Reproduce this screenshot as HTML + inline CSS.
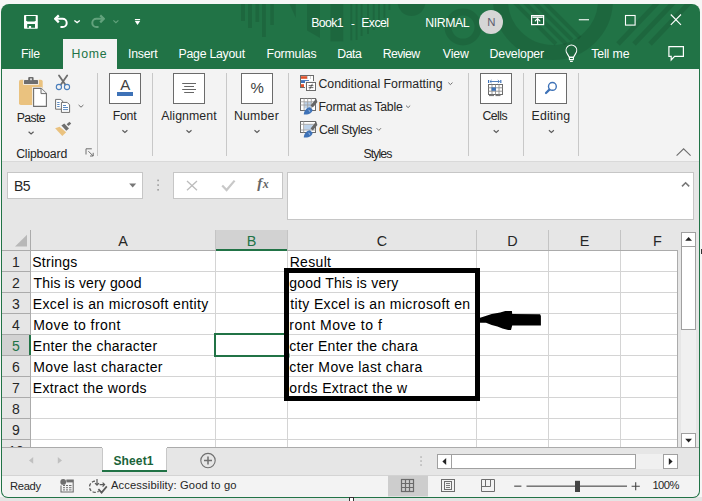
<!DOCTYPE html>
<html><head><meta charset="utf-8">
<style>
*{box-sizing:border-box}
html,body{margin:0;padding:0}
body{width:702px;height:501px;position:relative;overflow:hidden;background:#f6f6f6;font-family:"Liberation Sans",sans-serif;color:#262626}
.a{position:absolute}
.t{position:absolute;white-space:pre;line-height:1}
.w{color:#fff}
.sep{position:absolute;width:1px;background:#c8c8c8}
.hl{position:absolute;height:1px;background:#d4d4d4}
.vl{position:absolute;width:1px;background:#d4d4d4}
.cell{position:absolute;white-space:pre;font-size:14px;line-height:20px;color:#000}
.rn{position:absolute;left:2px;width:28px;text-align:center;font-size:14px;line-height:22px;color:#262626}
.ch{position:absolute;top:231px;height:20px;text-align:center;font-size:14.4px;line-height:20px;color:#262626}
</style></head>
<body>
<div class="a" style="left:0;top:497px;width:702px;height:4px;background:#e4e4e4"></div>
<!-- window green -->
<div class="a" style="left:1px;top:4px;width:699px;height:494px;border-radius:8px 8px 7px 7px;background:#217346"></div>

<svg class="a" style="left:0;top:0" width="702" height="501" viewBox="0 0 702 501">
<defs><clipPath id="tb"><path d="M1,12 A8,8 0 0 1 9,4 H692 A8,8 0 0 1 700,12 V69 H1 Z"/></clipPath></defs>
<g clip-path="url(#tb)" fill="#000" fill-opacity="0.1">
<rect x="241" y="0" width="4" height="21"/>
<rect x="248" y="0" width="4" height="28"/>
<rect x="255.4" y="0" width="3.8" height="22"/>
<rect x="262" y="0" width="3.9" height="37"/>
<rect x="270.2" y="0" width="3.7" height="25"/>
<path d="M289.5,4 H295.8 V18 Z"/>
<path d="M307,0 H320 V38 L307,30.4 Z"/>
<rect x="330.4" y="0" width="12.9" height="41.4"/>
<rect x="350.3" y="0" width="2" height="40.4"/>
<rect x="355.6" y="0" width="2" height="40"/>
<rect x="360.6" y="0" width="2" height="36"/>
<rect x="367" y="0" width="2" height="34"/>
<rect x="372.7" y="0" width="2" height="30"/>
<rect x="378" y="0" width="2" height="24"/>
<rect x="383.4" y="0" width="2" height="18"/>
<rect x="388.4" y="0" width="2" height="10"/>
<circle cx="411.5" cy="2" r="14"/>
</g>
<g clip-path="url(#tb)" fill="none" stroke="#000" stroke-opacity="0.1">
<circle cx="463" cy="27" r="15" stroke-width="7"/>
<circle cx="553" cy="0" r="52.5" stroke-width="15"/>
<path d="M512,0 L556,44 M522,0 L566,44 M532,0 L572,40 M542,0 L580,38" stroke-width="4"/>
<path d="M660,0 L618,44 M676,0 L634,44 M692,0 L650,44" stroke-width="5"/>
</g>
</svg>

<!-- ribbon -->
<div class="a" style="left:2px;top:69px;width:697px;height:93px;background:#f3f3f3;border-bottom:1px solid #d9d9d9"></div>
<!-- home tab -->
<div class="a" style="left:63px;top:39px;width:54px;height:31px;background:#f3f3f3"></div>

<!-- formula area + sheet bg -->
<div class="a" style="left:2px;top:162px;width:697px;height:285px;background:#e6e6e6"></div>
<div class="a" style="left:7px;top:172px;width:136px;height:27px;background:#fff;border:1px solid #c6c6c6"></div>
<div class="a" style="left:173px;top:172px;width:110px;height:27px;background:#fff;border:1px solid #c6c6c6"></div>
<div class="a" style="left:287px;top:172px;width:407px;height:48px;background:#fff;border:1px solid #c6c6c6"></div>
<!-- grid white -->
<div class="a" style="left:31px;top:251px;width:646px;height:196px;background:#fff"></div>
<!-- header bottom line -->
<div class="a" style="left:2px;top:250px;width:676px;height:1px;background:#ababab"></div>
<!-- row header right line -->
<div class="a" style="left:30px;top:230px;width:1px;height:217px;background:#ababab"></div>
<!-- grid right border -->
<div class="a" style="left:677px;top:250px;width:1px;height:197px;background:#ababab"></div>
<div class="hl" style="left:31px;top:271px;width:646px"></div>
<div class="a" style="left:2px;top:271px;width:28px;height:1px;background:#ababab"></div>
<div class="hl" style="left:31px;top:292px;width:646px"></div>
<div class="a" style="left:2px;top:292px;width:28px;height:1px;background:#ababab"></div>
<div class="hl" style="left:31px;top:313px;width:646px"></div>
<div class="a" style="left:2px;top:313px;width:28px;height:1px;background:#ababab"></div>
<div class="hl" style="left:31px;top:334px;width:646px"></div>
<div class="a" style="left:2px;top:334px;width:28px;height:1px;background:#ababab"></div>
<div class="hl" style="left:31px;top:355px;width:646px"></div>
<div class="a" style="left:2px;top:355px;width:28px;height:1px;background:#ababab"></div>
<div class="hl" style="left:31px;top:376px;width:646px"></div>
<div class="a" style="left:2px;top:376px;width:28px;height:1px;background:#ababab"></div>
<div class="hl" style="left:31px;top:397px;width:646px"></div>
<div class="a" style="left:2px;top:397px;width:28px;height:1px;background:#ababab"></div>
<div class="hl" style="left:31px;top:418px;width:646px"></div>
<div class="a" style="left:2px;top:418px;width:28px;height:1px;background:#ababab"></div>
<div class="hl" style="left:31px;top:439px;width:646px"></div>
<div class="a" style="left:2px;top:439px;width:28px;height:1px;background:#ababab"></div>
<div class="vl" style="left:215px;top:251px;height:196px"></div>
<div class="a" style="left:215px;top:230px;width:1px;height:20px;background:#c4c4c4"></div>
<div class="vl" style="left:287px;top:251px;height:196px"></div>
<div class="a" style="left:287px;top:230px;width:1px;height:20px;background:#c4c4c4"></div>
<div class="vl" style="left:476px;top:251px;height:196px"></div>
<div class="a" style="left:476px;top:230px;width:1px;height:20px;background:#c4c4c4"></div>
<div class="vl" style="left:548px;top:251px;height:196px"></div>
<div class="a" style="left:548px;top:230px;width:1px;height:20px;background:#c4c4c4"></div>
<div class="vl" style="left:620px;top:251px;height:196px"></div>
<div class="a" style="left:620px;top:230px;width:1px;height:20px;background:#c4c4c4"></div>
<!-- tabs bar -->
<div class="a" style="left:2px;top:447px;width:697px;height:29px;background:#e6e6e6;border-top:1px solid #ababab;border-bottom:1px solid #d4d4d4"></div>
<!-- status bar -->
<div class="a" style="left:2px;top:476px;width:697px;height:21px;background:#f3f3f3;border-radius:0 0 6px 6px"></div>

<svg class="a" style="left:0;top:0" width="702" height="501" viewBox="0 0 702 501">
<!-- QAT: save -->
<rect x="24" y="15" width="13.8" height="13.8" rx="0.8" fill="#fff"/>
<path d="M26.2,16.1 H35.7 V20.3 L34.6,21.4 H27.3 L26.2,20.3 Z" fill="#217346"/>
<path d="M27.2,24 H35 V27.7 H31.1 V25.9 H28.9 V27.7 H27.2 Z" fill="#217346"/>
<!-- undo -->
<g fill="none" stroke="#fff" stroke-width="2" stroke-linejoin="round">
  <path d="M55.4,18.8 H62.6 A4.1,4.1 0 0 1 62.6,27 H61.2" stroke-linecap="round"/>
  <path d="M58.8,15.4 L55.2,18.8 L58.8,22.4" stroke-width="2.3"/>
</g>
<path d="M74.4,20.4 L77.1,22.6 L79.8,20.4" fill="none" stroke="#fff" stroke-width="1.3"/>
<!-- redo dim -->
<g fill="none" stroke="#62a27c" stroke-width="2" stroke-linejoin="round">
  <path d="M103.6,18.8 H96.4 A4.1,4.1 0 0 0 96.4,27 H97.8" stroke-linecap="round"/>
  <path d="M100.2,15.4 L103.8,18.8 L100.2,22.4" stroke-width="2.3"/>
</g>
<path d="M113.4,20.4 L115.9,22.6 L118.4,20.4" fill="none" stroke="#62a27c" stroke-width="1.2"/>
<!-- customize qat -->
<rect x="134.9" y="19" width="5.2" height="1.2" fill="#fff"/>
<path d="M134.8,21 H140.2 L137.5,24.9 Z" fill="#fff"/>
<!-- ribbon display options -->
<g fill="none" stroke="#fff" stroke-width="1.2">
  <rect x="531.6" y="15.6" width="12" height="9"/>
  <path d="M532.4,17.2 H542.8" stroke-width="1.4"/>
  <path d="M537.6,24.4 V18.6 M535.3,20.8 L537.6,18.5 L539.9,20.8" stroke-linecap="round"/>
</g>
<!-- min / max / close -->
<rect x="578.8" y="19.2" width="10.2" height="1.1" fill="#fff"/>
<rect x="625.5" y="15.5" width="9.6" height="9.6" fill="none" stroke="#fff" stroke-width="1.1"/>
<path d="M670.8,14.5 L681,24.8 M681,14.5 L670.8,24.8" stroke="#fff" stroke-width="1.1"/>
<!-- lightbulb -->
<g fill="none" stroke="#fff" stroke-width="1.1" stroke-linejoin="round">
  <path d="M569.4,57.4 L567.2,53.6 A5.3,5.3 0 1 1 575.6,53.6 L573.4,57.4 Z"/>
  <rect x="569.4" y="57.4" width="4" height="2.2"/>
  <path d="M570,61.4 H572.8"/>
</g>
<!-- comment -->
<path d="M668.9,46.6 H683.4 V56.4 H674.6 L671.2,60 V56.4 H668.9 Z" fill="none" stroke="#fff" stroke-width="1.2"/>
</svg>

<!-- title texts -->
<div id="t_book" class="t w" style="left:311.20px;top:17.20px;font-size:12.3px;letter-spacing:-0.600px">Book1</div>
<div id="t_dash" class="t w" style="left:351px;top:17px;font-size:11.7px">-</div>
<div id="t_excel" class="t w" style="left:361.20px;top:17.20px;font-size:12.3px;letter-spacing:-0.550px">Excel</div>
<div id="t_nirmal" class="t w" style="left:425.20px;top:16.80px;font-size:12.3px;letter-spacing:-0.400px">NIRMAL</div>
<div class="a" style="left:479px;top:10px;width:24px;height:24px;border-radius:50%;background:#d6d6d6"></div>
<div id="t_n" class="t" style="left:487.20px;top:16.80px;font-size:11.4px;color:#5d5d6e">N</div>

<!-- tabs -->
<div id="tab_file" class="t w" style="left:21.00px;top:48.20px;font-size:12.3px;letter-spacing:-0.266px">File</div>
<div id="tab_home" class="t" style="left:71.60px;top:48.20px;font-size:12.3px;color:#217346;letter-spacing:0.734px">Home</div>
<div id="tab_insert" class="t w" style="left:128.00px;top:48.20px;font-size:12.3px;letter-spacing:-0.240px">Insert</div>
<div id="tab_pl" class="t w" style="left:178.60px;top:48.20px;font-size:12.3px;letter-spacing:-0.260px">Page Layout</div>
<div id="tab_form" class="t w" style="left:266.60px;top:48.20px;font-size:12.3px;letter-spacing:-0.172px">Formulas</div>
<div id="tab_data" class="t w" style="left:337.20px;top:48.20px;font-size:12.3px;letter-spacing:-0.400px">Data</div>
<div id="tab_review" class="t w" style="left:382.80px;top:48.20px;font-size:12.3px;letter-spacing:-0.600px">Review</div>
<div id="tab_view" class="t w" style="left:442.80px;top:48.20px;font-size:12.3px;letter-spacing:-0.133px">View</div>
<div id="tab_dev" class="t w" style="left:489.60px;top:48.20px;font-size:12.3px;letter-spacing:-0.200px">Developer</div>
<div id="tab_tell" class="t w" style="left:591.20px;top:48.20px;font-size:12.3px;letter-spacing:-0.100px">Tell me</div>

<svg class="a" style="left:0;top:0" width="702" height="501" viewBox="0 0 702 501">
<!-- paste -->
<rect x="19" y="79.8" width="23.7" height="25.2" rx="1.8" fill="#eac27f"/>
<rect x="23.2" y="79.2" width="15.6" height="5.6" fill="#f3f3f3"/>
<rect x="24" y="80" width="14" height="4" rx="0.6" fill="#6e6e6e"/>
<rect x="28.2" y="77" width="5.4" height="4" rx="1" fill="#6e6e6e"/>
<rect x="30.2" y="78.4" width="1.6" height="1.8" fill="#f3f3f3"/>
<path d="M32.2,87 H41.6 L47.8,93 V107.8 H32.2 Z" fill="#f3f3f3"/>
<path d="M33.6,88.4 H41 L46.4,93.6 V106.4 H33.6 Z" fill="#fff" stroke="#6e6e6e" stroke-width="1.1"/>
<path d="M41,88.4 V93.6 H46.4" fill="#f3f3f3" stroke="#6e6e6e" stroke-width="1"/>
<!-- scissors -->
<path d="M59,75.5 L65.6,85 M67.2,75.5 L60.6,85" stroke="#6e6e6e" stroke-width="1.8" stroke-linecap="round"/>
<circle cx="58.9" cy="87" r="2.6" fill="#f3f3f3" stroke="#4a7ebb" stroke-width="1.1"/>
<circle cx="67" cy="87" r="2.6" fill="#f3f3f3" stroke="#4a7ebb" stroke-width="1.1"/>
<!-- copy -->
<path d="M55.6,99.4 H60.8 L62.6,101.2 V109.2 H55.6 Z" fill="#fff" stroke="#6e6e6e" stroke-width="1"/>
<path d="M61.4,102.4 H67.2 L69.6,104.8 V112.4 H61.4 Z" fill="#fff" stroke="#6e6e6e" stroke-width="1"/>
<path d="M57.2,102.5 H59.6 M57.2,104.5 H59.6 M57.2,106.5 H59.6" stroke="#4a7ebb" stroke-width="0.9"/>
<path d="M63,105.5 H66 M63,107.5 H68 M63,109.6 H68" stroke="#4a7ebb" stroke-width="0.9"/>
<path d="M78.6,105 L81,107.2 L83.4,105" fill="none" stroke="#6e6e6e" stroke-width="1"/>
<!-- format painter -->
<path d="M55.1,128.3 L59.6,126.8 L66.2,132.2 L62.3,135.9 Z" fill="#eac27f"/>
<path d="M61.4,125.6 L64.3,123.6 L69,128.4 L66.3,130.8 Z" fill="#6e6e6e"/>
<path d="M66.6,124.2 L69.4,121.8 L71.2,123.6 L68.6,126 Z" fill="#6e6e6e"/>
<!-- paste chevron -->
<path d="M28.6,131.8 L31.1,134 L33.6,131.8" fill="none" stroke="#5a5a5a" stroke-width="1.15"/>
<!-- dialog launcher -->
<path d="M86,154.5 V148.8 H91.8" fill="none" stroke="#6e6e6e" stroke-width="1"/>
<path d="M88.4,151.2 L93.2,156 M93.2,152.8 V156 H90" fill="none" stroke="#6e6e6e" stroke-width="1"/>

<!-- big boxes -->
<g fill="#fff" stroke="#6b6b6b" stroke-width="1">
<rect x="109.5" y="73.5" width="31" height="30"/>
<rect x="173.5" y="73.5" width="31" height="30"/>
<rect x="241.5" y="73.5" width="31" height="30"/>
<rect x="480.5" y="73.5" width="31" height="30"/>
<rect x="535.5" y="73.5" width="31" height="30"/>
</g>
<!-- Font A -->

<rect x="117" y="92" width="16" height="4" fill="#3e72b7"/>
<!-- alignment lines -->
<path d="M182.2,83.5 H196 M184.2,86.5 H194 M182.2,89.5 H196 M184.2,92.5 H194" stroke="#666" stroke-width="1"/>
<!-- cells icon -->
<path d="M488.6,80 V83 M500.8,80 V83" stroke="#3e72b7" stroke-width="1.2"/>
<path d="M490,81.5 H499.4" stroke="#3e72b7" stroke-width="0.9"/>
<path d="M491.6,80 L490,81.5 L491.6,83 M497.8,80 L499.4,81.5 L497.8,83" fill="none" stroke="#3e72b7" stroke-width="0.9"/>
<rect x="488.5" y="84.5" width="14" height="10" fill="#fff" stroke="#6b6b6b" stroke-width="1"/>
<path d="M488.5,87.8 H502.5 M488.5,91.2 H502.5 M492,84.5 V94.5 M495.5,84.5 V94.5 M499,84.5 V94.5" stroke="#8c8c8c" stroke-width="0.9"/>
<rect x="491.5" y="87.4" width="4.4" height="3.4" fill="#3e72b7"/>
<path d="M489,95.6 H494 M495.5,95.6 H500.5" stroke="#6b6b6b" stroke-width="1"/>
<!-- editing magnifier -->
<circle cx="552.4" cy="86.4" r="3.9" fill="none" stroke="#3e72b7" stroke-width="1.4"/>
<path d="M549.4,89.6 L546,93" stroke="#3e72b7" stroke-width="2.2" stroke-linecap="round"/>
<!-- group chevrons -->
<g fill="none" stroke="#5a5a5a" stroke-width="1.15">
<path d="M122.4,130.2 L124.9,132.4 L127.4,130.2"/>
<path d="M186.5,130.2 L189,132.4 L191.5,130.2"/>
<path d="M254.5,130.2 L257,132.4 L259.5,130.2"/>
<path d="M493.7,130.2 L496.2,132.4 L498.7,130.2"/>
<path d="M548.9,130.2 L551.4,132.4 L553.9,130.2"/>
</g>
<g fill="none" stroke="#707070" stroke-width="1">
<path d="M448.3,82.6 L450.4,84.6 L452.5,82.6"/>
<path d="M406,105.6 L408.1,107.6 L410.2,105.6"/>
<path d="M376.6,128.2 L378.8,130.4 L381,128.2"/>
</g>
<!-- collapse ribbon chevron -->
<path d="M676.6,155.6 L683.6,148.8 L690.6,155.6" fill="none" stroke="#6e6e6e" stroke-width="1.1"/>
<!-- conditional formatting icon -->
<rect x="300.5" y="75.5" width="13" height="12" fill="#fff" stroke="#6b6b6b" stroke-width="1"/>
<rect x="301" y="76.2" width="6" height="2.6" fill="#e0522a"/>
<rect x="301" y="80.1" width="8" height="2.9" fill="#3e72b7"/>
<rect x="301" y="84.2" width="3" height="2.8" fill="#e0522a"/>
<path d="M307.5,76 V79 M310.5,76 V79" stroke="#c8c8c8" stroke-width="0.8"/>
<rect x="305" y="81" width="12" height="10.6" fill="#f3f3f3"/>
<rect x="306.5" y="82.5" width="9" height="8" fill="#fff" stroke="#6b6b6b" stroke-width="1"/>
<path d="M308.6,85.6 H313.4 M308.6,87.6 H313.4 M312.4,83.8 L309.6,89.4" stroke="#444" stroke-width="0.8"/>
<!-- format as table icon -->
<rect x="300.5" y="98.5" width="15" height="12" fill="#fff" stroke="#6b6b6b" stroke-width="1"/>
<rect x="304.4" y="102" width="7" height="6.4" fill="#bcd2ea"/>
<path d="M300.5,101.8 H315.5 M300.5,105 H315.5 M304.1,98.5 V110.5 M307.7,98.5 V110.5 M311.3,98.5 V110.5" stroke="#a0a0a0" stroke-width="0.9"/>
<path d="M316.2,98.6 L310.6,105.4 L312.8,107.6 L317.4,102 Z" fill="#666"/>
<path d="M303.8,114.4 C303.8,111 306.4,107.6 310,107.2 L312.6,109.8 C312.2,113.2 308.6,115 303.8,114.4 Z" fill="#3e72b7"/>
<path d="M308.6,110.2 L310.2,111.6" stroke="#fff" stroke-width="0.7"/>
<!-- cell styles icon -->
<rect x="300.5" y="121.5" width="15" height="11" fill="#fff" stroke="#6b6b6b" stroke-width="1"/>
<rect x="304.2" y="124.6" width="8.6" height="5.2" fill="#bcd2ea"/>
<path d="M300.5,124.3 H315.5 M300.5,130 H315.5 M303.7,121.5 V132.5" stroke="#a0a0a0" stroke-width="0.9"/>
<path d="M316.2,121.6 L310.6,128.4 L312.8,130.6 L317.4,125 Z" fill="#666"/>
<path d="M303.8,137.4 C303.8,134 306.4,130.6 310,130.2 L312.6,132.8 C312.2,136.2 308.6,138 303.8,137.4 Z" fill="#3e72b7"/>
<path d="M308.6,133.2 L310.2,134.6" stroke="#fff" stroke-width="0.7"/>

<!-- formula bar icons -->
<g fill="#9c9c9c"><rect x="157.3" y="179.6" width="1.6" height="1.6"/><rect x="157.3" y="184.3" width="1.6" height="1.6"/><rect x="157.3" y="189" width="1.6" height="1.6"/></g>
<path d="M187,181 L197,190.2 M197,181 L187,190.2" stroke="#bcbcbc" stroke-width="1.3"/>
<path d="M222.2,185.4 L226.6,190 L234.6,180.6" fill="none" stroke="#c8c8c8" stroke-width="2.2"/>
<path d="M129.2,183.4 H136.2 L132.7,187.4 Z" fill="#777"/>
<path d="M682,186.4 L685.6,182.8 L689.2,186.4" fill="none" stroke="#777" stroke-width="1.6"/>
</svg>

<!-- ribbon group labels -->
<div id="l_paste" class="t" style="left:16.80px;top:111.60px;font-size:12.3px;letter-spacing:-0.650px">Paste</div>
<div id="l_clip" class="t" style="left:16.20px;top:147.80px;font-size:12.3px;letter-spacing:-0.199px">Clipboard</div>
<div id="l_font" class="t" style="left:112.80px;top:109.60px;font-size:12.3px;letter-spacing:-0.267px">Font</div>
<div id="l_align" class="t" style="left:161.20px;top:110.00px;font-size:12.3px;letter-spacing:0.100px">Alignment</div>
<div id="l_num" class="t" style="left:234.00px;top:109.60px;font-size:12.3px;letter-spacing:0.200px">Number</div>
<div id="l_cf" class="t" style="left:318.40px;top:78.00px;font-size:12.3px;letter-spacing:0.019px">Conditional Formatting</div>
<div id="l_fat" class="t" style="left:318.60px;top:101.00px;font-size:12.3px;letter-spacing:-0.271px">Format as Table</div>
<div id="l_cs" class="t" style="left:319.00px;top:123.80px;font-size:12.3px;letter-spacing:-0.460px">Cell Styles</div>
<div id="l_styles" class="t" style="left:363.60px;top:147.60px;font-size:12.3px;letter-spacing:-0.960px">Styles</div>
<div id="l_cells" class="t" style="left:482.40px;top:110.40px;font-size:12.3px;letter-spacing:-0.500px">Cells</div>
<div id="l_edit" class="t" style="left:531.60px;top:110.40px;font-size:12.3px;letter-spacing:0.133px">Editing</div>

<div class="sep" style="left:97px;top:73px;height:83px"></div>
<div class="sep" style="left:152px;top:73px;height:83px"></div>
<div class="sep" style="left:226px;top:73px;height:83px"></div>
<div class="sep" style="left:288px;top:73px;height:83px"></div>
<div class="sep" style="left:468px;top:73px;height:83px"></div>
<div class="sep" style="left:523px;top:73px;height:83px"></div>
<div class="sep" style="left:578px;top:73px;height:83px"></div>

<!-- name box / formula bar -->
<div id="t_b5" class="t" style="left:14.00px;top:179.00px;font-size:14px;letter-spacing:-0.600px">B5</div>
<div id="t_fx" class="t" style="left:257.20px;top:176.30px;font-size:15px;font-family:'Liberation Serif';font-style:italic;font-weight:bold;color:#666">f<span style="font-size:12px;margin-left:0.5px">x</span></div>
<div id="t_fontA" class="t" style="left:120.20px;top:77.00px;font-size:15px;color:#404040">A</div>
<div id="t_pct" class="t" style="left:250.40px;top:80.20px;font-size:15px;color:#404040">%</div>

<!-- column headers -->
<div class="ch" style="left:31px;width:184px">A</div>
<div class="a" style="left:216px;top:230px;width:71px;height:21px;background:#d2d2d2;border-bottom:2px solid #217346"></div>
<div class="ch" style="left:216px;width:71px;color:#217346">B</div>
<div class="ch" style="left:288px;width:188px">C</div>
<div class="ch" style="left:477px;width:71px">D</div>
<div class="ch" style="left:549px;width:71px">E</div>
<div class="ch" style="left:622px;width:71px">F</div>

<!-- row numbers -->
<div class="rn" style="top:251px">1</div>
<div class="rn" style="top:272px">2</div>
<div class="rn" style="top:293px">3</div>
<div class="rn" style="top:314px">4</div>
<div class="a" style="left:2px;top:335px;width:29px;height:20px;background:#d2d2d2;border-right:2px solid #217346"></div>
<div class="rn" style="top:335px;color:#217346">5</div>
<div class="rn" style="top:356px">6</div>
<div class="rn" style="top:377px">7</div>
<div class="rn" style="top:398px">8</div>
<div class="rn" style="top:419px">9</div>
<div class="rn" style="top:440px;height:7px;overflow:hidden">10</div>

<!-- cells text -->
<div id="c_a1" class="cell" style="left:32.20px;top:251.70px;letter-spacing:0.266px">Strings</div>
<div id="c_a2" class="cell" style="left:33.60px;top:273.10px;letter-spacing:0.125px">This is very good</div>
<div id="c_a3" class="cell" style="left:32.80px;top:293.70px;letter-spacing:0.364px">Excel is an microsoft entity</div>
<div id="c_a4" class="cell" style="left:33.20px;top:315.10px;letter-spacing:0.467px">Move to front</div>
<div id="c_a5" class="cell" style="left:32.80px;top:335.70px;letter-spacing:0.289px">Enter the character</div>
<div id="c_a6" class="cell" style="left:33.20px;top:357.10px;letter-spacing:0.399px">Move last character</div>
<div id="c_a7" class="cell" style="left:32.80px;top:377.50px;letter-spacing:0.350px">Extract the words</div>
<div id="c_c1" class="cell" style="left:289.70px;top:251.70px;letter-spacing:0.320px">Result</div>
<div id="c_c2" class="cell" style="left:289.30px;top:273.10px;letter-spacing:0.212px">good This is very</div>
<div id="c_c3" class="cell" style="left:290.30px;top:293.70px;letter-spacing:0.364px">tity Excel is an microsoft en</div>
<div id="c_c4" class="cell" style="left:289.30px;top:315.10px;letter-spacing:0.538px">ront Move to f</div>
<div id="c_c5" class="cell" style="left:289.30px;top:335.70px;letter-spacing:0.285px">cter Enter the chara</div>
<div id="c_c6" class="cell" style="left:289.30px;top:357.10px;letter-spacing:0.368px">cter Move last chara</div>
<div id="c_c7" class="cell" style="left:289.30px;top:377.50px;letter-spacing:0.341px">ords Extract the w</div>

<!-- sheet tab -->
<div class="a" style="left:102px;top:447px;width:65px;height:25px;background:#fff;border-bottom:2px solid #217346"></div>
<div id="t_sheet" class="t" style="left:113.50px;top:454.50px;font-size:12px;font-weight:bold;color:#1a6339;letter-spacing:0.120px">Sheet1</div>

<!-- status -->
<div id="t_ready" class="t" style="left:10.00px;top:480.50px;font-size:11.2px;letter-spacing:-0.300px">Ready</div>
<div id="t_acc" class="t" style="left:111.00px;top:480.20px;font-size:11.2px;letter-spacing:0.125px">Accessibility: Good to go</div>
<div class="a" style="left:388px;top:475px;width:40px;height:21px;background:#d2d2d2"></div>
<div id="t_zoom" class="t" style="left:652.40px;top:480.20px;font-size:11.2px;letter-spacing:-0.533px">100%</div>

<svg class="a" style="left:0;top:0" width="702" height="501" viewBox="0 0 702 501">
<!-- select all triangle -->
<path d="M27,234.8 V246.5 H15 Z" fill="#b8b8b8"/>
<!-- selection B5 -->
<rect x="215" y="334" width="72" height="22" fill="none" stroke="#217346" stroke-width="2"/>
<rect x="285" y="353" width="5" height="5" fill="#217346" stroke="#fff" stroke-width="1"/>
<!-- vertical scrollbar -->
<rect x="681" y="246" width="15" height="201" fill="#f0f0f0"/>
<rect x="681.5" y="232.5" width="14" height="14" fill="#fff" stroke="#a0a0a0" stroke-width="1"/>
<path d="M685.2,240.8 L688.6,237 L692,240.8 Z" fill="#222"/>
<rect x="681.5" y="246.5" width="14" height="83" fill="#fff" stroke="#a0a0a0" stroke-width="1"/>
<rect x="681.5" y="433.5" width="14" height="14" fill="#fff" stroke="#a0a0a0" stroke-width="1"/>
<path d="M685.2,438.8 L688.6,442.6 L692,438.8 Z" fill="#222"/>
<!-- sheet nav arrows -->
<path d="M33.2,457 L29,460.4 L33.2,463.8 Z" fill="#c0c0c0"/>
<path d="M57.8,457 L62,460.4 L57.8,463.8 Z" fill="#c0c0c0"/>
<!-- sheet tab borders -->
<path d="M102.5,448 V470 M166.5,448 V470" stroke="#c8c8c8" stroke-width="1"/>
<!-- add sheet -->
<circle cx="208" cy="460.6" r="7.2" fill="none" stroke="#707070" stroke-width="1.1"/>
<path d="M204,460.6 H212 M208,456.6 V464.6" stroke="#707070" stroke-width="1.5"/>
<!-- splitter dots -->
<g fill="#b0b0b0"><rect x="420.3" y="456.3" width="1.5" height="1.5"/><rect x="420.3" y="460.3" width="1.5" height="1.5"/><rect x="420.3" y="464.3" width="1.5" height="1.5"/></g>
<!-- h scrollbar -->
<rect x="437" y="454" width="241" height="15" fill="#f0f0f0"/>
<rect x="437.5" y="454.5" width="14" height="14" fill="#fff" stroke="#a0a0a0" stroke-width="1"/>
<path d="M446.2,458 L442.4,461.5 L446.2,465 Z" fill="#222"/>
<rect x="451.5" y="454.5" width="184" height="14" fill="#fff" stroke="#a0a0a0" stroke-width="1"/>
<rect x="663.5" y="454.5" width="14" height="14" fill="#fff" stroke="#a0a0a0" stroke-width="1"/>
<path d="M668.8,458 L672.6,461.5 L668.8,465 Z" fill="#222"/>
<!-- status: macro icon -->
<circle cx="63.2" cy="481.9" r="2.9" fill="#6e6e6e"/>
<path d="M66.4,480 H73.2 V492 H61 V485.6" fill="none" stroke="#6e6e6e" stroke-width="1.1"/>
<rect x="66.4" y="480" width="6.8" height="2.4" fill="#6e6e6e"/>
<g fill="#6e6e6e"><rect x="63" y="485" width="2" height="1"/><rect x="66" y="485" width="2" height="1"/><rect x="69" y="485" width="2.5" height="1"/>
<rect x="63" y="487.2" width="2" height="1"/><rect x="66" y="487.2" width="2" height="1"/><rect x="69" y="487.2" width="2.5" height="1"/>
<rect x="63" y="489.4" width="2" height="1"/><rect x="66" y="489.4" width="2" height="1"/><rect x="69" y="489.4" width="2.5" height="1"/></g>
<!-- accessibility icon -->
<path d="M95,481.2 A5.6,5.6 0 1 0 98.6,491.2" fill="none" stroke="#5a5a5a" stroke-width="1.3" stroke-dasharray="3.2 1.7"/>
<path d="M97,479 V485 M95,483.1 L97,485.2 L99,483.1" fill="none" stroke="#5a5a5a" stroke-width="1.2"/>
<path d="M99.6,484.6 H104.4 M102.6,482.6 L104.6,484.6 L102.6,486.6" fill="none" stroke="#5a5a5a" stroke-width="1.2"/>
<path d="M98.4,489.2 L101.6,492.6 L106.8,486.4" fill="none" stroke="#5a5a5a" stroke-width="1.7"/>
<!-- view buttons -->
<rect x="388" y="476" width="40" height="20.5" fill="#cdcdcd"/>
<rect x="401.5" y="479.5" width="12" height="12" fill="none" stroke="#6a6a6a" stroke-width="1.2"/>
<path d="M405.5,479.5 V491.5 M409.5,479.5 V491.5 M401.5,483.5 H413.5 M401.5,487.5 H413.5" stroke="#6a6a6a" stroke-width="1.2"/>
<rect x="441.5" y="479.5" width="13" height="12" fill="none" stroke="#6e6e6e" stroke-width="1"/>
<rect x="444.5" y="481.5" width="7" height="8" fill="none" stroke="#6e6e6e" stroke-width="1"/>
<path d="M446,483.5 H450 M446,485.5 H450 M446,487.5 H450" stroke="#6e6e6e" stroke-width="0.9"/>
<path d="M481.5,479.5 H494.5 V491.5 H481.5 Z M481.5,486.5 H490.5 V479.5 M485.5,479.5 V486.5" fill="none" stroke="#6e6e6e" stroke-width="1"/>
<!-- zoom slider -->
<rect x="514.2" y="485.6" width="7.2" height="1.1" fill="#444"/>
<rect x="526.5" y="485.6" width="100.5" height="1.1" fill="#444"/>
<rect x="575" y="480.8" width="5" height="11.2" fill="#444"/>
<path d="M631.6,486.2 H639.8 M635.7,482.2 V490.2" stroke="#444" stroke-width="1.1"/>
<!-- arrow -->
<path d="M480,317.7 L482.5,317.1 L487.1,315.4 L491.7,313.9 L500.2,312.5 L505.3,311.1 L511.9,311.1 L512.2,313.9 L540.1,314.2 L540.9,316 L540.9,325.6 L512.2,325.6 L511,329.9 L508.2,329.9 L502.5,328.5 L497.4,326.4 L491.7,325 L486,322.8 L480,322.8 Z" fill="#000"/>
</svg>

<div class="a" style="left:701px;top:249px;width:1px;height:5px;background:#333"></div>
<div class="a" style="left:349px;top:497px;width:5px;height:5px;background:#fff;border:1px solid #333"></div>
<!-- black box + arrow -->
<div class="a" style="left:284px;top:268px;width:196px;height:133px;border:5px solid #000"></div>
</body></html>
